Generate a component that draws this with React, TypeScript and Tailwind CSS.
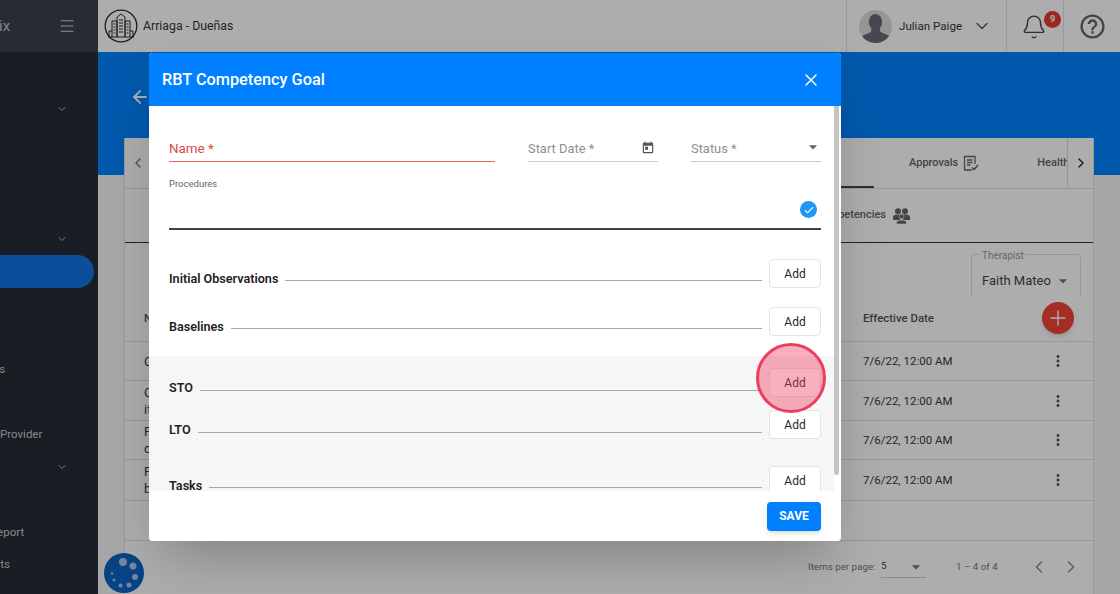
import { ArrowLeft, Bell, ChevronDown, ChevronLeft, ChevronRight, Menu, X } from "lucide-react";
import { MdArrowDropDown, MdCheck, MdHelpOutline, MdMoreVert, MdToday } from "react-icons/md";

const navRows: { label?: string; shift?: number; chevron?: boolean; active?: boolean }[] = [
  { chevron: true },
  {},
  {},
  {},
  { chevron: true },
  { active: true },
  {},
  {},
  { label: "Clients", shift: -30 },
  {},
  { label: "Provider", shift: 0 },
  { chevron: true },
  {},
  { label: "Report", shift: -10 },
  { label: "Charts", shift: -24 },
];

const tableRows = [
  { top: "C", bottom: "", height: "h-[39px]" },
  { top: "C", bottom: "it", height: "h-[40px]" },
  { top: "P", bottom: "c", height: "h-[39px]" },
  { top: "P", bottom: "b", height: "h-[41px]" },
];

const Logo = () => (
  <svg width="34" height="34" viewBox="0 0 34 34" fill="none" stroke="#2a2a2a" strokeWidth="1">
    <circle cx="17" cy="17" r="15.8" strokeWidth="1.3" />
    <path d="M8 28V12h5v16M13 28V8l4-3 4 3v20M21 28V12h5v16M5 28v-6h3M26 22h3v6M4 28h26" />
    <path d="M9.5 15h2M9.5 18h2M9.5 21h2M9.5 24h2M15 11h4M15 14h4M15 17h4M15 20h4M15 23h4M22.5 15h2M22.5 18h2M22.5 21h2M22.5 24h2" />
  </svg>
);

const Avatar = () => (
  <div className="w-[33px] h-[33px] rounded-full bg-[#dcdcdc] overflow-hidden">
    <svg width="33" height="33" viewBox="0 0 33 33" fill="#666a73">
      <ellipse cx="16.5" cy="12" rx="6.6" ry="8" />
      <path d="M12.5 18h8l1 4 8 3.5c1 1 2 3 2 7.5H2c0-4.500 1-6.500 2-7.500l8-3.500z" />
    </svg>
  </div>
);

const ApprovalsIcon = () => (
  <svg width="17" height="17" viewBox="0 0 17 17" fill="none" stroke="#666" strokeWidth="1.3">
    <path d="M10 15H2.500V1.500h10.500V9" />
    <path d="M5 5h5.500M5 7.500h5.500M5 10h3.500" />
    <path d="M10 12.500l2 2 4-4.500" strokeWidth="1.6" />
  </svg>
);

// two people behind, one in front
const GroupIcon = ({ className = "" }: { className?: string }) => (
  <svg width="17" height="16" viewBox="0 0 17 16" fill="#666" className={className}>
    <circle cx="5" cy="3.200" r="3" />
    <circle cx="12" cy="3.200" r="3" />
    <path d="M0 12V9c0-1.500 1.500-2.500 5-2.500.8 0 1.500.1 2 .2V12zM17 12V9c0-1.500-1.500-2.500-5-2.500-.8 0-1.500.1-2 .2V12z" />
    <circle cx="8.500" cy="8.500" r="2.400" stroke="#fff" strokeWidth=".6" />
    <path d="M3.500 16v-1.500c0-1.500 2-2.500 5-2.500s5 1 5 2.500V16z" stroke="#fff" strokeWidth=".6" />
  </svg>
);

const LoadingBadge = () => (
  <svg width="40" height="40" viewBox="0 0 40 40">
    <circle cx="20" cy="20" r="20" fill="#0b63c4" />
    <g fill="#a9c6e8">
      <circle cx="19" cy="9" r="4" />
      <circle cx="29" cy="13" r="3.500" />
      <circle cx="31" cy="24" r="3" />
      <circle cx="25" cy="32" r="2.500" />
      <circle cx="16.500" cy="32.500" r="2" />
      <circle cx="10" cy="27" r="1.500" />
      <circle cx="8" cy="20.500" r="1.200" />
    </g>
  </svg>
);

const SectionRow = ({ label, className = "", lineClass = "mt-[4px]" }: { label: string; className?: string; lineClass?: string }) => (
  <div className={`flex items-center gap-[7px] h-[29px] ${className}`}>
    <div className="flex-1 flex items-center gap-[7px] mt-[10px]">
      <span className="text-[12.600px] font-semibold text-[#1f2126] leading-4">{label}</span>
      <div className={`flex-1 h-px bg-[#a9a9a9] ${lineClass}`} />
    </div>
    <button className="w-[52px] h-[29px] shrink-0 bg-white border border-[#e4e4e4] rounded text-[12px] text-[#2a2a2a]">
      Add
    </button>
  </div>
);

export default function App() {
  return (
    <div className="relative w-[1120px] h-[594px] overflow-hidden flex bg-[#f6f6f6] font-['Roboto',sans-serif]">
      {/* Sidebar */}
      <aside className="w-[98px] shrink-0 bg-[#272c35] text-[#c4c7cc] overflow-hidden">
        <div className="h-[52px] bg-[#3c404d] flex items-center justify-between pr-[22px]">
          <span className="text-[15px] -ml-[1px]">ix</span>
          <Menu size={18} strokeWidth={1.4} className="text-[#d0d2d6]" />
        </div>
        <div className="pt-[40px]">
          {navRows.map((row, i) => (
            <div
              key={i}
              className={`h-[32.6px] flex items-center justify-between pr-[30px] text-[11.500px] pt-px whitespace-nowrap ${
                row.active ? "w-[94px] bg-[#1173e6] rounded-r-full" : ""
              }`}
            >
              {row.label ? <span style={{ marginLeft: row.shift }}>{row.label}</span> : <span />}
              {row.chevron && <ChevronDown size={12} strokeWidth={1.8} />}
            </div>
          ))}
        </div>
      </aside>

      <div className="flex-1 min-w-0 flex flex-col">
        {/* Top bar */}
        <header className="h-[52px] shrink-0 bg-white flex items-center text-[#33353a]">
          <div className="flex-1 flex items-center pl-[6px] gap-[5px]">
            <Logo />
            <span className="text-[12.300px]">Arriaga - Dueñas</span>
          </div>
          <div className="w-[160px] h-full border-l border-[#e2e2e2] flex items-center pl-[12px]">
            <Avatar />
            <span className="ml-[7px] mt-px text-[11.600px]">Julian Paige</span>
            <ChevronDown size={20} strokeWidth={1.6} className="ml-[10px] text-[#555]" />
          </div>
          <div className="relative w-[57px] h-full border-l border-[#e2e2e2] flex items-center justify-center">
            <Bell size={26} strokeWidth={1.3} className="text-[#444] mr-[2px] mt-[1px]" />
            <span className="absolute left-[37px] top-[11px] w-[17px] h-[17px] rounded-full bg-[#e53935] text-white text-[9px] font-bold flex items-center justify-center">
              9
            </span>
          </div>
          <div className="w-[57px] h-full border-l border-[#e2e2e2] flex items-center justify-center">
            <MdHelpOutline size={29} className="text-[#666]" />
          </div>
        </header>

        {/* Blue band */}
        <div className="h-[123px] shrink-0 bg-[#0083ff] pl-[32px] pt-[35px]">
          <ArrowLeft size={20} strokeWidth={2.4} className="text-white" />
        </div>

        {/* Card */}
        <div className="flex-1 mx-[26px] -mt-[37px] bg-white border-x border-[#e0e0e0] text-[#33353a]">
          <div className="h-[51px] flex items-center border-b border-[#e0e0e0]">
            <div className="w-[25px] h-full flex items-center justify-center text-[#777]">
              <ChevronLeft size={16} />
            </div>
            <div className="flex-1 relative h-full flex items-center overflow-hidden pt-px text-[11px] font-medium text-[#666]">
              <div className="absolute left-[631px] bottom-0 w-[93px] h-[2px] bg-[#444]" />
              <span className="ml-[759px]">Approvals</span>
              <span className="ml-[4px]"><ApprovalsIcon /></span>
              <span className="ml-[58px]">Health</span>
            </div>
            <div className="w-[26px] h-full flex items-center justify-center border-l border-[#dcdcdc] text-[#222]">
              <ChevronRight size={16} />
            </div>
          </div>
          <div className="h-[54px] flex items-center justify-end pr-[183px] border-b border-[#333] text-[11px] font-medium text-[#666]">
            <span>Competencies</span>
            <GroupIcon className="ml-[7px]" />
          </div>
          <div className="h-[57px] flex justify-end pt-[11px] pr-[12px]">
            <div className="relative w-[110px] h-[42px] border border-b-0 border-[#dedede] rounded-t px-[10px] pt-[16px] text-[13px] text-[#444] flex justify-between">
              <span className="absolute -top-[5px] left-[9px] bg-white px-px text-[10px] leading-3 text-[#999]">Therapist</span>
              <span className="whitespace-nowrap">Faith Mateo</span>
              <MdArrowDropDown size={20} className="text-[#777] -mr-[3px] shrink-0" />
            </div>
          </div>
          <div className="h-[42px] flex items-center pl-[19px] border-b border-[#e0e0e0] text-[11.400px] font-medium text-[#555]">
            <span className="w-[719px] -mt-[4px]">N</span>
            <span className="flex-1 -mt-[4px]">Effective Date</span>
            <span className="w-[32px] h-[32px] mr-[19px] -mt-[6px] rounded-full bg-[#f44336] flex items-center justify-center shadow-md">
              <svg width="18" height="18" viewBox="0 0 18 18" stroke="white" strokeWidth="1.4">
                <path d="M9 1.500v15M1.500 9h15" />
              </svg>
            </span>
          </div>
          {tableRows.map((row, i) => (
            <div key={i} className={`${row.height} flex items-center pl-[19px] pr-[26px] border-b border-[#e0e0e0] text-[11.500px] text-[#3a3a3a]`}>
              <span className="w-[719px] leading-[17px] text-[13px]">
                {row.top}
                {row.bottom && <br />}
                {row.bottom}
              </span>
              <span className="flex-1 pt-[2px]">7/6/22, 12:00 AM</span>
              <MdMoreVert size={18} className="text-[#555]" />
            </div>
          ))}
          <div className="h-[40px] border-b border-[#e0e0e0]" />
          <div className="h-[52px] flex items-center text-[9.800px] text-[#777] whitespace-nowrap">
            <span className="ml-[683px] w-[66px] shrink-0">Items per page:</span>
            <div className="ml-[7px] w-[45px] h-[22px] shrink-0 border-b border-[#cfcfcf] flex items-center justify-between text-[#444]">
              5
              <MdArrowDropDown size={20} className="text-[#777]" />
            </div>
            <span className="ml-[30px] w-[42px] shrink-0">1 – 4 of 4</span>
            <ChevronLeft size={20} strokeWidth={1.6} className="ml-[31px] shrink-0 text-[#888]" />
            <ChevronRight size={20} strokeWidth={1.6} className="ml-[12px] shrink-0 text-[#888]" />
          </div>
        </div>
      </div>

      {/* Loading badge */}
      <div className="absolute left-[104px] top-[553px]">
        <LoadingBadge />
      </div>

      {/* Backdrop */}
      <div className="absolute inset-0 bg-black/[0.32]" />

      {/* Dialog */}
      <div className="absolute left-[149px] top-[53px] w-[692px] h-[488px] bg-white rounded shadow-2xl flex flex-col overflow-hidden">
        <div className="h-[53px] shrink-0 bg-[#007fff] text-white flex items-center justify-between pl-[13px] pr-[20px]">
          <h2 className="text-[16.300px] font-medium pt-[2px]">RBT Competency Goal</h2>
          <X size={20} strokeWidth={1.8} />
        </div>

        <div className="relative flex-1 min-h-0 overflow-hidden">
          <div className="mr-[7px]">
            <div className="px-[20px] mr-[-7px] pr-[20px]">
              <div className="flex gap-[33px] pt-[33px] text-[12.900px]">
                <div className="w-[326px] h-[23px] flex flex-col justify-between">
                  <span className="text-[#d9483b] text-[13.400px]">Name *</span>
                  <div className="h-px bg-[#e8685c]" />
                </div>
                <div className="w-[130px] h-[23px] border-b border-[#cccccc] text-[#8f8f8f] flex justify-between pr-[3px]">
                  Start Date *
                  <MdToday size={14} className="text-[#555] mt-[2px]" />
                </div>
                <div className="w-[130px] h-[23px] border-b border-[#cccccc] text-[#8f8f8f] flex justify-between">
                  Status *
                  <MdArrowDropDown size={20} className="text-[#666] -mt-[2px] -mr-[2px]" />
                </div>
              </div>
              <p className="mt-[16px] text-[9.500px] leading-3 text-[#666]">Procedures</p>
              <div className="h-[40px] border-b-2 border-[#3f4350] flex justify-end pt-[11px] pr-[4px]">
                <span className="w-[17px] h-[17px] rounded-full bg-[#2196f3] flex items-center justify-center">
                  <MdCheck size={12} className="text-white" />
                </span>
              </div>
              <SectionRow label="Initial Observations" className="mt-[29px]" />
              <SectionRow label="Baselines" className="mt-[19px]" />
            </div>
            <div className="mt-[20px] h-[135px] bg-[#f6f6f6] pl-[20px] pr-[13px] pt-[12px]">
              <SectionRow label="STO" lineClass="mt-[5px]" />
              <SectionRow label="LTO" className="mt-[13px]" lineClass="mt-[6px]" />
              <SectionRow label="Tasks" className="mt-[27px]" />
            </div>
          </div>
          {/* Scrollbar */}
          <div className="absolute right-[2px] top-0 w-[5px] h-[369px] bg-[#c4c4c4] rounded-b" />
        </div>

        <div className="h-[50px] shrink-0 bg-white flex items-center justify-end pr-[20px]">
          <button className="w-[54px] h-[29px] rounded bg-[#007fff] text-white text-[12px] font-bold shadow-md">SAVE</button>
        </div>
      </div>

      {/* Click highlight */}
      <div className="absolute left-[756px] top-[343px] w-[70px] h-[70px] rounded-full border-[3px] border-[#ec3e5f] bg-[#f0365a]/40" />
    </div>
  );
}
